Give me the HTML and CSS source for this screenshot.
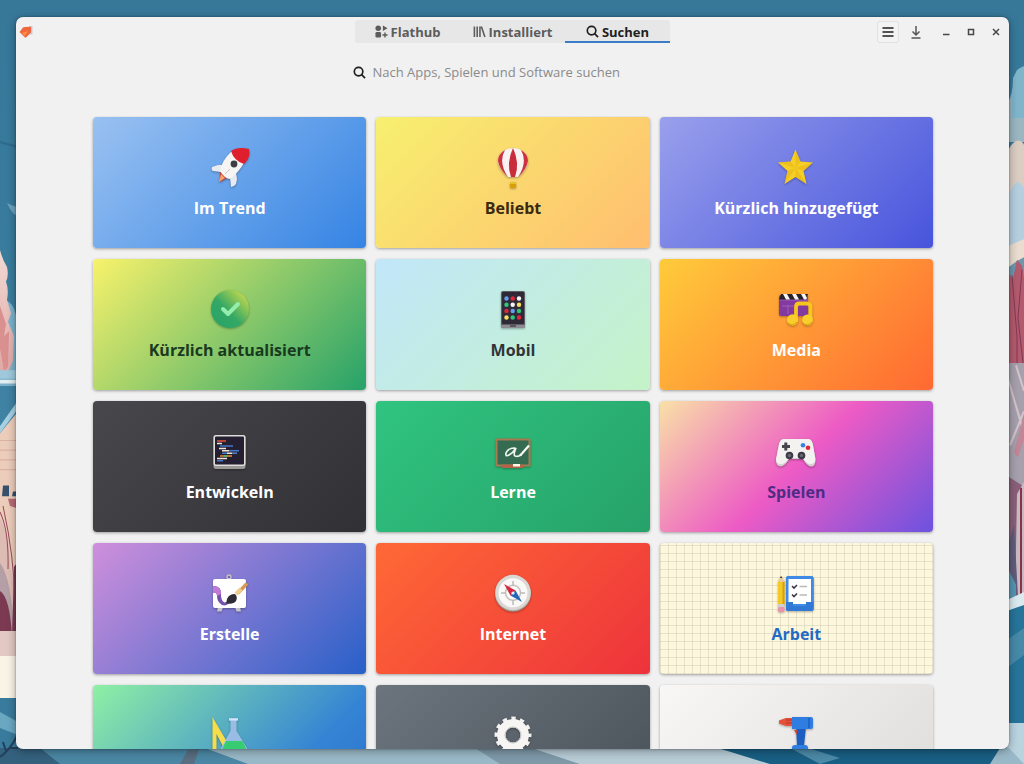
FILE: index.html
```html
<!DOCTYPE html>
<html lang="de">
<head>
<meta charset="utf-8">
<meta name="viewport" content="width=device-width, initial-scale=1">
<title>Software – Suchen</title>
<link rel="stylesheet" href="styles.css">
</head>
<body>
<svg class="wallpaper" viewBox="0 0 1024 764" preserveAspectRatio="none" aria-hidden="true">
  <defs>
    <linearGradient id="sky" x1="0" y1="0" x2="0" y2="1"><stop offset="0" stop-color="#377899"/><stop offset=".3" stop-color="#387b9c"/><stop offset="1" stop-color="#4b8eac"/></linearGradient>
    <linearGradient id="pink" x1="0" y1="0" x2="0" y2="1"><stop offset="0" stop-color="#f2d9d2"/><stop offset="1" stop-color="#dfa9a8"/></linearGradient>
  </defs>
  <rect width="1024" height="764" fill="url(#sky)"/>
  <g transform="matrix(1 0 0 1.213 0 -27.700)">
    <path d="M0 139L18 143V145L0 141Z" fill="#2f6b8c"/>
    <path d="M7 190Q12 193 18 193V201Q12 200 7 190Z" fill="#6ba3bd"/>
    <path d="M0 270Q18 268 18 300V345H0Z" fill="#7cb2cb"/>
    <path d="M0 229Q3 238 7 243Q9 250 6 255Q9 262 7 270L11 281L8 288L14 300L13 320L8 330H0Z" fill="url(#pink)"/>
    <path d="M0 275L6 290L4 300L9 296L8 325L4 329L0 310Z" fill="#d9908f"/>
    <rect y="328" width="18" height="7" fill="#9fc8dc"/>
    <rect y="336" width="18" height="3" fill="#e3eef2"/>
    <path d="M0 341H18V352L0 374Z" fill="#3f82a3"/>
    <path d="M0 374L18 353V360L0 380Z" fill="#a6cfe1"/>
    <path d="M0 380L18 362V515H0Z" fill="#eccdbb"/>
    <path d="M0 386H18M0 394H18M0 402H18M0 410H18" stroke="#d9b3a1"/>
    <path d="M3 423H9V432H2ZM13 428H18V432H12Z" fill="#37516c"/>
    <path d="M8 434H18V442L10 440Z" fill="#b96a76"/>
    <path d="M0 450Q9 462 10 490L18 515V545H0Z" fill="#ddbcb4"/>
    <path d="M0 445Q9 460 8 492M3 440Q14 480 15 520" stroke="#984b5d" fill="none"/>
    <path d="M0 487Q12 500 14 548H0Z" fill="#b49fa6"/>
    <path d="M0 510Q10 515 12 548H0ZM14 490L18 486V548H12Z" fill="#7c3a52"/>
  </g>
  <rect y="631" width="18" height="26" fill="#e3c9c3"/>
  <rect y="656" width="18" height="43" fill="#faf4e7"/>
  <path d="M0 698H18L40 764H0Z" fill="#397b9c"/>
  <path d="M0 712L18 722V735L0 728Z" fill="#6aa7c1"/>
  <path d="M1007 103Q1013 96 1013 78L1017 70L1020 68L1024 66V125H1007Z" fill="#7fb5cb"/>
  <path d="M1007 102L1012 97L1012 118H1024V142H1007Z" fill="#9ab6c1"/>
  <g transform="matrix(1 0 0 1.213 0 -27.700)">
    <path d="M1007 148Q1017 133 1024 142V235H1007Z" fill="#dccdc3"/>
    <path d="M1007 188Q1016 164 1024 178V222L1007 227Z" fill="#b5cfdf"/>
    <path d="M1007 226L1024 220V250H1007Z" fill="#eadccf"/>
    <path d="M1007 244L1017 238L1024 235V325H1007Z" fill="#6d98ac"/>
    <path d="M1007 246L1013 253L1017 237L1022 242L1024 252V325H1007Z" fill="#b45a6e"/>
    <path d="M1012 250L1017 300V322M1022 245L1018 285L1023 322" stroke="#813a52" fill="none"/>
    <path d="M1007 322H1024V470H1007Z" fill="#a6a0ad"/>
    <path d="M1008 335L1024 380M1016 324L1024 345M1010 390Q1020 370 1024 362" stroke="#d3c3cb" stroke-width="2" fill="none"/>
    <path d="M1014 396L1024 364V385L1018 400Z" fill="#c18697"/>
    <path d="M1007 415L1024 424V500L1018 545L1007 515Z" fill="#8a6079"/>
    <path d="M1017 430L1024 420V520H1015Z" fill="#c7bac2"/>
    <path d="M1007 475L1014 455L1019 530H1007Z" fill="#625c7a"/>
    <path d="M1007 490L1016 505V530H1007Z" fill="#5794b1"/>
    <path d="M1021 425V516" stroke="#8c3248" stroke-width="2"/>
  </g>
  <path d="M1007 600L1024 592V606L1007 612Z" fill="#dbeaef"/>
  <path d="M1007 611L1024 605V726H1007Z" fill="#27749a"/>
  <path d="M1007 640L1024 628V655L1007 668Z" fill="#4789a8"/>
  <path d="M1007 723H1024V764H1007Z" fill="#b9d3df"/>
  <path d="M0 748H1009L1024 764H0Z" fill="#9ab9c8"/>
  <path d="M0 748H205L248 764H0Z" fill="#4b87a4"/>
  <path d="M180 764L188 750L199 749L194 764Z" fill="#596e80"/>
  <path d="M475 748H532L580 764H500Z" fill="#7f99a9"/>
  <path d="M532 748H718L770 764H580Z" fill="#b8ccd6"/>
  <path d="M718 748H1000L990 764H770Z" fill="#195f84"/>
  <path d="M790 748H808L840 758L820 764Z" fill="#4c8aa8"/>
  <path d="M0 748H40L60 764H0Z" fill="#34617e"/>
  <path d="M0 757Q10 750 17 736M6 751L3 742M9 748L18 748" stroke="#243f5a" stroke-width="2" fill="none"/>
</svg>

<div class="window">
  <header class="titlebar">
    <div class="titlebar-start">
      <svg class="app-icon" viewBox="0 0 14 12" role="img" aria-label="Software">
        <path d="M10 0h3.500V8l-3 1z" fill="#c9ccd6"/>
        <path d="M.5 6L4 1.500Q4.500 1 6 1L12 .8V6.500L7.500 11Q6.500 12 5.500 11Z" fill="#f0663f"/>
        <path d="M3 7L9 5L5.500 10Z" fill="#fb9148"/>
      </svg>
    </div>
    <nav class="switcher" aria-label="Ansichten">
      <button class="tab" type="button">
        <svg class="tab-icon" viewBox="0 0 14 14" aria-hidden="true" fill="currentColor"><circle cx="3.500" cy="3.500" r="3"/><path d="M8.500 .5L13.500 3.500L8.500 6.500Z"/><rect x=".5" y="7.500" width="6" height="6" rx="1.500"/><path d="M10 8h1.500v2H13.500v1.500H11.500v2H10v-2H8v-1.500h2z"/></svg>
        <span>Flathub</span>
      </button>
      <button class="tab" type="button">
        <svg class="tab-icon" viewBox="0 0 14 14" aria-hidden="true" fill="none" stroke="currentColor" stroke-width="1.700"><path d="M1.500 1.500V13M4.500 1.500V13M7.500 1.500V13M9 1.500L12.800 13"/></svg>
        <span>Installiert</span>
      </button>
      <button class="tab tab-active" type="button" aria-current="page">
        <svg class="tab-icon" viewBox="0 0 14 14" aria-hidden="true" fill="none" stroke="currentColor" stroke-width="1.800"><circle cx="6" cy="6" r="4.600"/><path d="M9.300 9.300L13 13"/></svg>
        <span>Suchen</span>
      </button>
    </nav>
    <div class="titlebar-end">
      <button class="tool tool-menu" type="button" aria-label="Menü"><svg viewBox="0 0 16 16" fill="none" stroke="#1f1f1f" stroke-width="1.600"><path d="M2.500 4H13.500M2.500 8H13.500M2.500 12H13.500"/></svg></button>
      <button class="tool" type="button" aria-label="Downloads"><svg viewBox="0 0 16 16" fill="none" stroke="#565656" stroke-width="1.500"><path d="M8 2V11M4.500 7.500L8 11L11.500 7.500M3.500 14H12.500"/></svg></button>
      <button class="control" type="button" aria-label="Minimieren"><svg viewBox="0 0 8 8" fill="none" stroke="#484848" stroke-width="1.500"><path d="M1 6.500H7.500"/></svg></button>
      <button class="control" type="button" aria-label="Maximieren"><svg viewBox="0 0 8 8" fill="none" stroke="#484848" stroke-width="1.500"><rect x="1.500" y="1.500" width="5" height="5"/></svg></button>
      <button class="control" type="button" aria-label="Schließen"><svg viewBox="0 0 8 8" fill="none" stroke="#484848" stroke-width="1.500"><path d="M1 1L7 7M7 1L1 7"/></svg></button>
    </div>
  </header>

  <label class="search">
    <svg class="search-icon" viewBox="0 0 14 14" aria-hidden="true" fill="none" stroke="#1f1f1f" stroke-width="1.800"><circle cx="6" cy="6" r="4.600"/><path d="M9.300 9.300L13 13"/></svg>
    <input class="search-input" type="text" aria-label="Suchen" placeholder="Nach Apps, Spielen und Software suchen">
  </label>

  <main class="tiles">
    <button class="tile trend" type="button">
      <svg class="art" viewBox="0 0 42 42" aria-hidden="true">
        <path d="M11 26L18 32L11 36Z" fill="#c53a27"/><path d="M12 28L16 32L10 36Z" fill="#f3a26d"/>
        <path d="M16 19L9 19L3 21Q2 24 4 25L12 26Z" fill="#e8eaf0"/>
        <path d="M21 31L27 27L28 33L27 38Q25 41 22 41Z" fill="#e8eaf0"/>
        <path d="M11 25Q13 14 23 5L35 17Q29 27 21 33Q15 32 11 25Z" fill="#f6f5f4"/>
        <path d="M22 5Q29 0 40 3Q42 12 35 18Q25 15 22 5Z" fill="#df1f2d"/>
        <circle cx="25" cy="18" r="3.400" fill="#3d3d42"/><path d="M16 28L21 23" stroke="#c7c5c2"/>
      </svg><span>Im Trend</span>
    </button>
    <button class="tile popular" type="button">
      <svg class="art" viewBox="0 0 42 42" aria-hidden="true">
        <path d="M6 15A15 13 0 0 1 36 15C36 22 30 27 26 31H16C12 27 6 22 6 15Z" fill="#f8f3f2"/>
        <path d="M13 4Q6 8 6 15Q7 23 16 31Q6 16 13 4ZM29 4Q36 8 36 15Q35 23 26 31Q36 16 29 4Z" fill="#cc3340"/>
        <path d="M21 2Q14 17 19 31H23Q28 17 21 2Z" fill="#c92c3a"/>
        <rect x="18" y="36" width="6" height="6" rx="1" fill="#d99e08"/><path d="M18 37H24" stroke="#eabf2c" stroke-width="2"/>
      </svg><span>Beliebt</span>
    </button>
    <button class="tile fresh" type="button">
      <svg class="art" viewBox="0 0 42 42" aria-hidden="true">
        <path d="M20.500 3.500L25.500 15.500L38 16.500L28.500 25L31.500 38L20.500 31L9.500 38L12.500 25L3 16.500L15.500 15.500Z" fill="#f5cf25"/>
        <path d="M20.500 3.500L25.500 15.500L20.500 22ZM38 16.500L28.500 25L20.500 22ZM31.500 38L20.500 31V22ZM9.500 38L12.500 25L20.500 22ZM3 16.500L15.500 15.500L20.500 22Z" fill="#e0aa13" opacity=".4"/>
      </svg><span>Kürzlich hinzugefügt</span>
    </button>

    <button class="tile updated" type="button">
      <svg class="art" viewBox="0 0 42 42" aria-hidden="true">
        <defs><linearGradient id="seal" x1=".9" y1=".1" x2=".2" y2=".8"><stop offset="0" stop-color="#c4d94e"/><stop offset=".65" stop-color="#35a865"/><stop offset="1" stop-color="#2ba567"/></linearGradient></defs>
        <circle cx="21" cy="21" r="19" fill="url(#seal)"/><path d="M14 21L19 26L29 16" fill="none" stroke="#93edad" stroke-width="4" stroke-linecap="round" stroke-linejoin="round"/>
      </svg><span>Kürzlich aktualisiert</span>
    </button>
    <button class="tile mobile" type="button">
      <svg class="art" viewBox="0 0 42 42" aria-hidden="true">
        <rect x="9" y="3" width="24" height="37" rx="2" fill="#5e5c64"/><rect x="10" y="4" width="22" height="32" rx="1" fill="#302a38"/><path d="M9 37H33V39Q33 40 31 40H11Q9 40 9 39Z" fill="#8d8a91"/><path d="M19 5.500H22M26 5.500H28M18 38H24" stroke="#242127"/>
        <g fill="#62a0ea"><circle cx="14.500" cy="10.500" r="2.200"/><circle cx="20.700" cy="23" r="2.200"/></g>
        <g fill="#e0263b"><circle cx="20.700" cy="10.500" r="2.200"/><circle cx="14.500" cy="23" r="2.200"/><circle cx="27" cy="29.500" r="2.200"/></g>
        <g fill="#f6f5f4"><circle cx="27" cy="10.500" r="2.200"/><circle cx="20.700" cy="16.700" r="2.200"/></g>
        <g fill="#2fc57c"><circle cx="14.500" cy="16.700" r="2.200"/><circle cx="27" cy="23" r="2.200"/><circle cx="20.700" cy="29.500" r="2.200"/></g>
        <g fill="#f7df61"><circle cx="27" cy="16.700" r="2.200"/><circle cx="14.500" cy="29.500" r="2.200"/></g>
      </svg><span>Mobil</span>
    </button>
    <button class="tile media" type="button">
      <svg class="art" viewBox="0 0 42 42" aria-hidden="true">
        <rect x="4" y="7" width="29" height="21" rx="2" fill="#823a9e"/><path d="M4 12H33M13 17V26M7 18H19" stroke="#aa66c2" stroke-width=".8"/>
        <path d="M6 6H33L31 11.500H4Z" fill="#272329"/><path d="M8 6H12L15 11.500H11ZM17 6H21L24 11.500H20ZM26 6H30L32 10L31 11.500H29Z" fill="#f6f5f4"/>
        <path d="M21 32V19Q21 15.500 24.500 15.500H32Q35.500 15.500 35.500 19V31" fill="none" stroke="#f6c51e" stroke-width="3.800"/>
        <circle cx="17.500" cy="32" r="5.700" fill="#f8cd2c"/><circle cx="32.500" cy="32" r="5.500" fill="#f8cd2c"/><path d="M13 35Q17 39 22 34M28 35Q32 39 37 34" fill="none" stroke="#d99c10"/>
      </svg><span>Media</span>
    </button>

    <button class="tile develop" type="button">
      <svg class="art" viewBox="0 0 42 42" aria-hidden="true">
        <rect x="4.500" y="5" width="32" height="34" rx="2.500" fill="#9a9996"/><rect x="4.500" y="5" width="32" height="31" rx="2.500" fill="#deddda"/><rect x="6" y="6.500" width="29" height="28" rx="1" fill="#241f31"/>
        <g stroke-width="1.500"><path d="M8 11H17" stroke="#e8553a"/><path d="M8 13.500H13M10 18.500H17M13 20.800H20M18 23.200H23M8 28.500H18" stroke="#eee4d5"/><path d="M11 16H24M20 20.800H30M13 23.200H18M8 30.800H14" stroke="#4678c5"/><path d="M11 26H23" stroke="#ed8a29"/><path d="M15 26H19" stroke="#40bd73"/><path d="M23 23.200H28" stroke="#5c84c9"/></g>
      </svg><span>Entwickeln</span>
    </button>
    <button class="tile learn" type="button">
      <svg class="art" viewBox="0 0 42 42" aria-hidden="true">
        <rect x="3.500" y="8.500" width="35" height="28" rx="1.500" fill="#a97a50"/><rect x="5.500" y="10.500" width="31" height="24" fill="#356b51"/>
        <path d="M23 18Q16 18 14 23Q13 27 17 25Q21 23 24 18Q21 25 23 26Q26 27 29 25" fill="none" stroke="#eef4ee" stroke-width="1.700" stroke-linecap="round"/><path d="M37 15.500L30 23.500L28 25.500" stroke="#f7f7f5" stroke-width="2.200"/>
        <rect x="10" y="34.500" width="21" height="3.500" rx="1" fill="#b5624a"/><rect x="21" y="34" width="7" height="2.500" fill="#fffbe5"/>
      </svg><span>Lerne</span>
    </button>
    <button class="tile play" type="button">
      <svg class="art" viewBox="0 0 42 42" aria-hidden="true">
        <path d="M8 9H34Q37 10 38 15L40.500 31Q40 37 35.500 36.500Q32 36 28 29H14Q10 36 6 36.500Q1 36 1 31L4 14Q5 10 8 9Z" fill="#d4d2cf"/>
        <path d="M8 9H34Q37 10 38 15L40.500 29Q40 34 35.500 34Q32 34 28 28H14Q10 34 6 34Q1 34 1 29L4 14Q5 10 8 9Z" fill="#f3f2f0"/>
        <path d="M9.300 12.500H12.300V15H15V18H12.300V20.500H9.300V18H7V15H9.300Z" fill="#46444d"/>
        <circle cx="14.500" cy="25.500" r="3.800" fill="#3d3846"/><circle cx="26.500" cy="25.500" r="3.800" fill="#3d3846"/><circle cx="14.500" cy="25.500" r="1.800" fill="#68656e"/><circle cx="26.500" cy="25.500" r="1.800" fill="#68656e"/>
        <circle cx="28" cy="15.300" r="2.300" fill="#3584e4"/><circle cx="33" cy="17.700" r="2.300" fill="#e0263b"/>
      </svg><span>Spielen</span>
    </button>

    <button class="tile create" type="button">
      <svg class="art" viewBox="0 0 42 42" aria-hidden="true">
        <circle cx="20" cy="5" r="2" fill="none" stroke="#c8c6c3" stroke-width="1.300"/><path d="M9 35L8 39.500H12.500L14 35ZM26 35L27.500 39.500H32L31 35Z" fill="#c5c4c6"/>
        <rect x="4" y="7" width="33" height="29" rx="2" fill="#fff"/>
        <path d="M4 14Q13 13 12 24Q13 33 20 30L23 27Q19 35 13 33Q8 30 8 24Q8 20 4 21Z" fill="#7552ad"/><path d="M4 14Q12 14 12 22L8 24Q8 20 4 21Z" fill="#c07ad6"/>
        <path d="M38 11.500L29 21" stroke="#d79955" stroke-width="3.500"/><path d="M32 17L27 22" stroke="#f0ce8a" stroke-width="4"/>
        <path d="M18 27Q20 22 26 22Q29 25 27 29Q24 33 16 31Q18 30 18 27Z" fill="#302c35"/>
      </svg><span>Erstelle</span>
    </button>
    <button class="tile internet" type="button">
      <svg class="art" viewBox="0 0 42 42" aria-hidden="true">
        <circle cx="21" cy="21.500" r="18" fill="#aaa7a2"/><circle cx="21" cy="20.500" r="17.700" fill="#dad8d4"/><circle cx="21" cy="20.800" r="14.500" fill="#faf9f7"/>
        <circle cx="21" cy="20.800" r="7.500" fill="none" stroke="#c6c3be" stroke-width="1.500"/><path d="M21 9V14M21 28V33M9 21H14M28 21H33" stroke="#bdbab5" stroke-width="1.500"/>
        <path d="M12 12L23.500 18.500L18.500 23.500Z" fill="#d5273d"/><path d="M30 30L23.500 18.500L18.500 23.500Z" fill="#2467ba"/><circle cx="21" cy="21" r="1.600" fill="#eee"/>
      </svg><span>Internet</span>
    </button>
    <button class="tile work" type="button">
      <svg class="art" viewBox="0 0 42 42" aria-hidden="true">
        <path d="M3 10L6 4L9.500 10V34H3Z" fill="#f5c924"/><path d="M7.500 9H9.500V34H7.500Z" fill="#d99c18"/><path d="M3 10L6 4L9.500 10Z" fill="#e8caa1"/><path d="M5 6L6 4L7.300 6Z" fill="#302c35"/><rect x="3" y="32" width="6.500" height="3" fill="#d1ced1"/><rect x="3" y="35" width="6.500" height="5" rx="1.500" fill="#eb93aa"/>
        <rect x="11" y="4" width="27.500" height="35" rx="2.500" fill="#2672cf"/><rect x="11" y="4" width="27.500" height="32" rx="2.500" fill="#3d8be7"/><rect x="13.500" y="7" width="22.500" height="25" fill="#fff"/><path d="M11 30H18V34H31V30H38.500V37Q38.500 39 36.500 39H13Q11 39 11 37Z" fill="#3079d4"/>
        <path d="M17 14L19 16L22 13M17 22.500L19 24.500L22 21.500" fill="none" stroke="#3d3846" stroke-width="1.600"/><path d="M24.500 14.500H32M24.500 23H32" stroke="#bbb9b5" stroke-width="1.400"/>
      </svg><span>Arbeit</span>
    </button>

    <button class="tile science" type="button" aria-label="Wissenschaft">
      <svg class="art" viewBox="0 0 42 42" aria-hidden="true">
        <path fill-rule="evenodd" d="M3.500 3L25 40H3.500ZM7.500 20V36H16Z" fill="#f8dd4a"/>
        <path d="M20 4H29V6.500H27.500V17L38 34Q40 40 35 40H15Q10 40 12 34L21.500 17V6.500H20Z" fill="#a5c5ee" opacity=".88"/><path d="M17 27H33.500L37 34Q38 38 35 38H15Q12 38 14 33Z" fill="#38cc72"/><path d="M20 5.500H29" stroke="#d5e5fb" stroke-width="2"/>
      </svg>
    </button>
    <button class="tile system" type="button" aria-label="System">
      <svg class="art" viewBox="0 0 42 42" aria-hidden="true">
        <circle cx="21" cy="21" r="16.500" fill="none" stroke="#f3f2f0" stroke-width="4" stroke-dasharray="4.320 4.320" stroke-dashoffset="2.160"/>
        <circle cx="21" cy="21" r="11.700" fill="none" stroke="#f6f5f4" stroke-width="8.500"/><circle cx="21" cy="21" r="8" fill="none" stroke="#c6c4c1"/>
      </svg>
    </button>
    <button class="tile tools" type="button" aria-label="Werkzeuge">
      <svg class="art" viewBox="0 0 42 42" aria-hidden="true">
        <path d="M4 6.500L11 4H18V12H11L4 9.500Z" fill="#e5503a"/><path d="M11 6H18M11 9H18" stroke="#b83427"/>
        <path d="M21 13H31L29 32H22Z" fill="#1c5fc0"/><path d="M17 3H36Q38 3 38 5V13Q38 15 36 15H17Z" fill="#2f7de1"/><path d="M34 4V14" stroke="#1c5fc0" stroke-width="1.500"/><path d="M19 16H22V21Z" fill="#d6432f"/><path d="M17 34Q17 31 20 31H30Q33 31 33 34V40H17Z" fill="#2f7de1"/>
      </svg>
    </button>
  </main>
</div>
</body>
</html>
```

FILE: styles.css
```css
* { box-sizing: border-box; }

body {
  margin: 0;
  height: 100vh;
  padding: 17px 15px 15px 16px;
  overflow: hidden;
  background: #387b9c;
  font-family: "Open Sans", "Noto Sans", sans-serif;
  font-size: 13px;
}

button, input { font: inherit; color: inherit; }

.wallpaper {
  position: absolute;
  inset: 0;
  width: 100%;
  height: 100%;
  z-index: -1;
}

.window {
  display: flex;
  flex-direction: column;
  height: 100%;
  overflow: hidden;
  border-radius: 7px;
  background: #f1f1f1;
  box-shadow: 0 0 2px rgba(0, 0, 0, .4), 0 2px 10px rgba(0, 0, 0, .35);
}

.titlebar {
  flex: none;
  display: grid;
  grid-template-columns: 1fr auto 1fr;
  align-items: center;
  padding: 3px 0;
}

.titlebar-start, .titlebar-end { display: flex; align-items: center; }
.titlebar-start { padding-left: 3px; }
.titlebar-end { justify-content: flex-end; padding-right: 1px; }

.app-icon { width: 14px; height: 12px; }

.switcher {
  display: grid;
  grid-template-columns: repeat(3, 105px);
  border-radius: 3px;
  background: #e7e7e7;
}

.tab {
  display: flex;
  align-items: center;
  justify-content: center;
  gap: 3px;
  height: 23px;
  padding: 0;
  border: 0;
  background: none;
  color: #5c5c5c;
  font-weight: 700;
}

.tab-active { color: #1f1f1f; box-shadow: inset 0 -2px #3b7cc9; }
.tab-icon, .search-icon { flex: none; width: 13px; height: 13px; }

.tool, .control {
  display: grid;
  place-items: center;
  padding: 0;
  border: 0;
  background: none;
}

.tool { width: 22px; height: 22px; margin-right: 6px; }
.tool-menu { border: 1px solid #e2e2e2; border-radius: 3px; background: #f3f3f3; }
.tool svg { width: 16px; height: 16px; }
.control { width: 25px; height: 22px; }
.control svg { width: 8px; height: 8px; }

.search {
  flex: none;
  display: flex;
  align-items: center;
  gap: 7px;
  width: 320px;
  max-width: 100%;
  height: 24px;
  margin: 14px auto 32px;
}

.search-input {
  flex: 1;
  min-width: 0;
  padding: 0;
  border: 0;
  outline: 0;
  background: none;
  color: #1f1f1f;
}

.search-input::placeholder { color: #8a8a8a; opacity: 1; }

.tiles {
  flex: 1;
  min-height: 0;
  overflow: hidden;
  display: grid;
  grid-template-columns: repeat(3, 1fr);
  grid-auto-rows: 131px;
  gap: 11px 10px;
  padding: 1px 76px 0 77px;
}

.tile {
  display: flex;
  flex-direction: column;
  align-items: center;
  gap: 8px;
  padding: 29px 8px 0;
  border: 0;
  border-radius: 4px;
  box-shadow: 0 1px 3px rgba(0, 0, 0, .35);
  color: #fff;
  font-size: 16px;
  font-weight: 700;
  line-height: 24px;
}

.art {
  flex: none;
  width: 42px;
  height: 42px;
  filter: drop-shadow(0 1px 1px rgba(0, 0, 0, .3));
}

.trend { background: linear-gradient(135deg, #99c1f1, #3584e4); }
.popular { background: linear-gradient(135deg, #f7f06f, #ffbe6f); color: #3a2b10; }
.fresh { background: linear-gradient(135deg, #99a0ec, #4754dc); }
.updated { background: linear-gradient(135deg, #f8f26b, #26a269); color: #183a20; }
.mobile { background: linear-gradient(135deg, #c1e7f9, #c4f3c8); color: #303438; }
.media { background: linear-gradient(135deg, #ffcb3a, #ff6932); }
.develop { background: linear-gradient(135deg, #48484c, #313135); }
.learn { background: linear-gradient(135deg, #30c480, #26a269); }
.play { background: linear-gradient(135deg, #f9e1a7, #ed5bc5 50%, #6c52e0); color: #4d2c82; }
.create { background: linear-gradient(135deg, #cf8fdc, #2860c8); }
.internet { background: linear-gradient(135deg, #ff6936, #ed333b); }

.work {
  background:
    repeating-linear-gradient(90deg, rgba(165, 160, 150, .25) 0 1px, transparent 1px 8px),
    repeating-linear-gradient(0deg, rgba(165, 160, 150, .25) 0 1px, transparent 1px 8px),
    #fdf7db;
  color: #1f6bc5;
}

.science { background: linear-gradient(135deg, #8ff0a4, #3584d4 70%, #2a70d0); }
.system { background: linear-gradient(135deg, #6c747d, #485058); }
.tools { background: linear-gradient(135deg, #f8f7f6, #dddbd8); }
```
